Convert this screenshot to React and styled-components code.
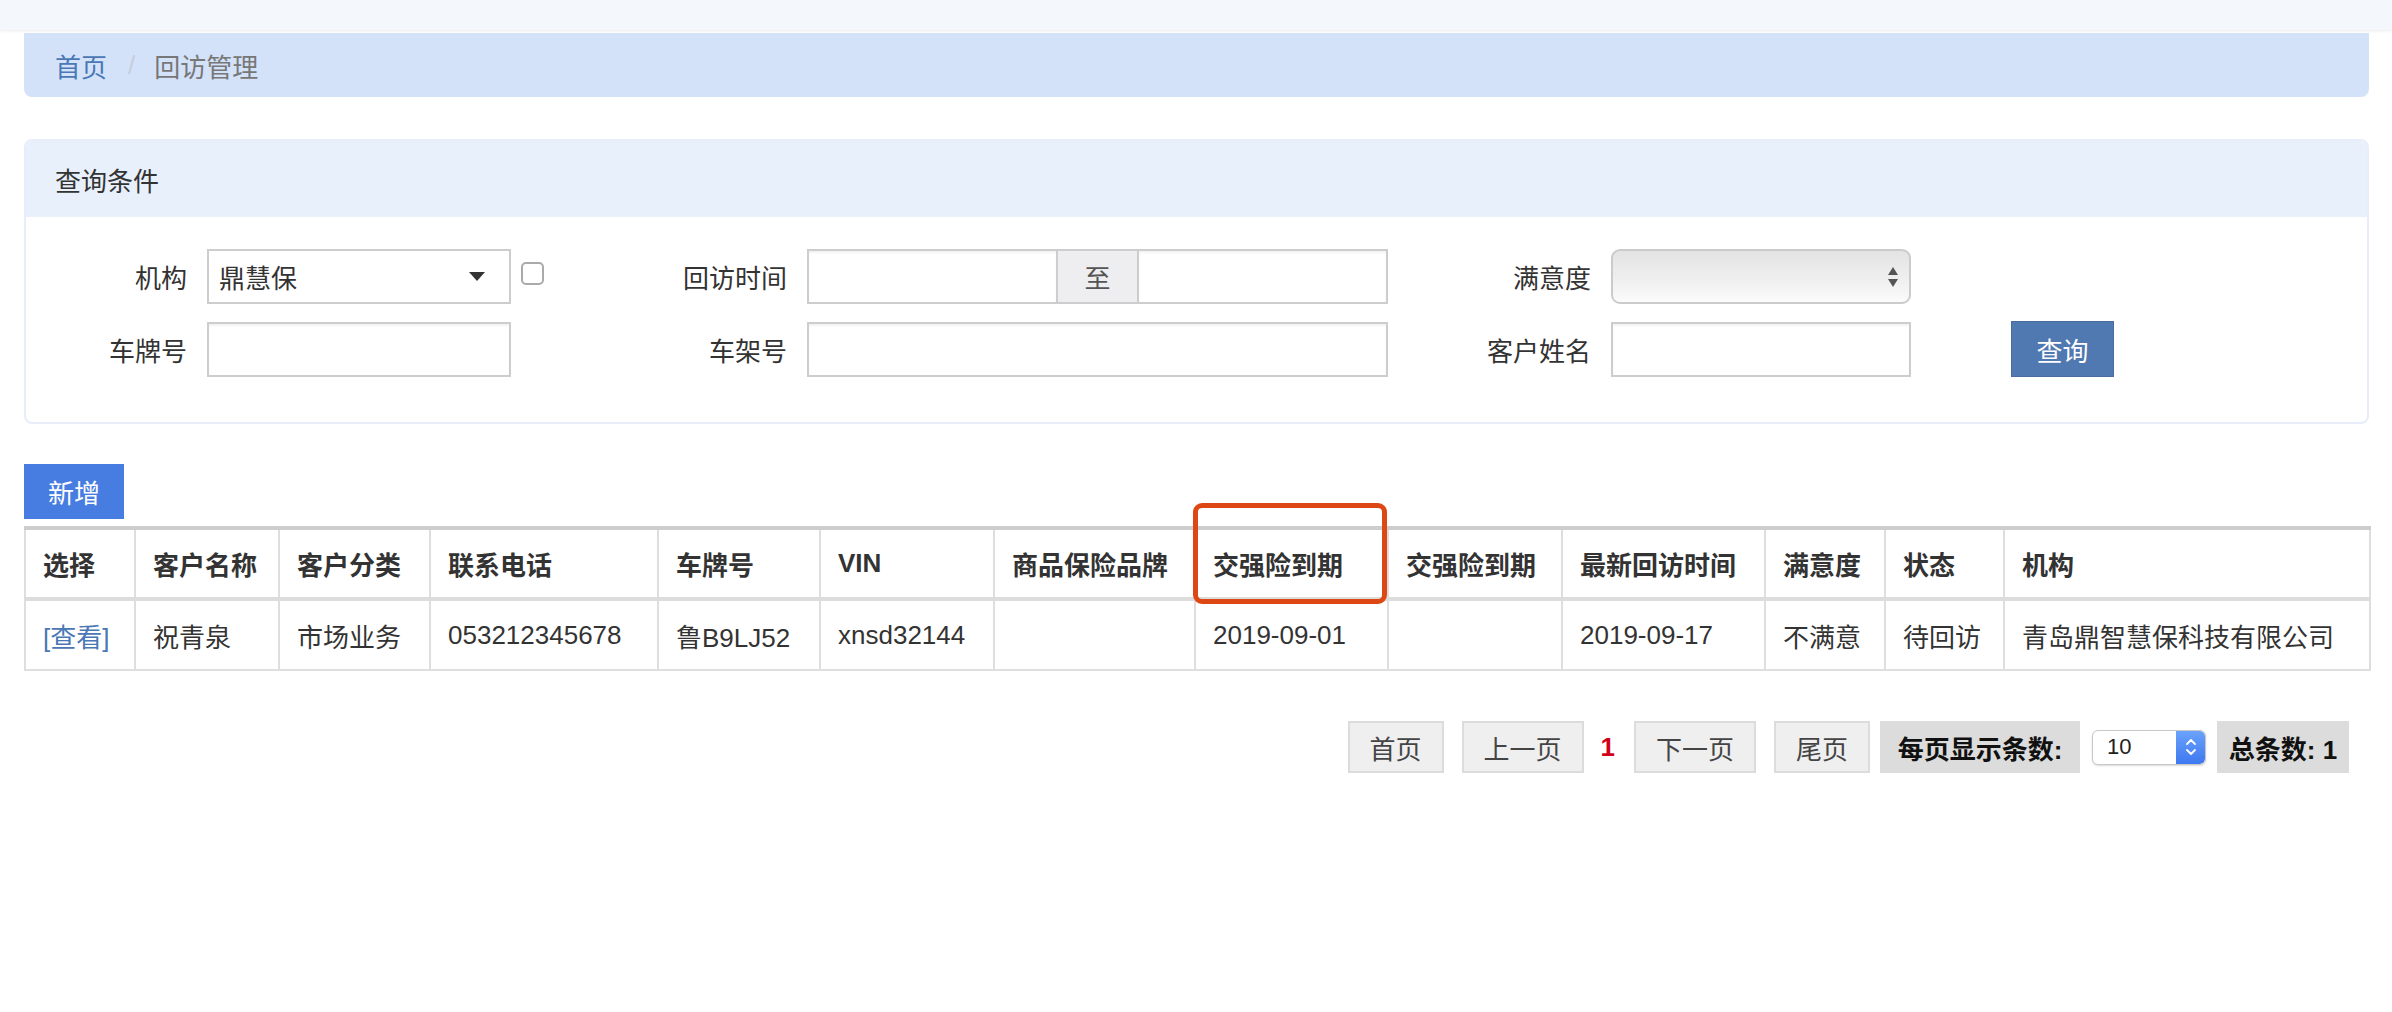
import React from 'react';
import styled, { createGlobalStyle, css } from 'styled-components';

const GlobalStyle = createGlobalStyle`
    html, body {
        margin: 0;
        padding: 0;
        background: #fff;
    }
    body {
        font-family: "Liberation Sans", "Noto Sans CJK SC", sans-serif;
        font-size: 26px;
        color: #333;
    }
    * { box-sizing: border-box; }
`;

const columnas = [
    { titulo: '选择', ancho: 110 },
    { titulo: '客户名称', ancho: 144 },
    { titulo: '客户分类', ancho: 151 },
    { titulo: '联系电话', ancho: 228 },
    { titulo: '车牌号', ancho: 162 },
    { titulo: 'VIN', ancho: 174 },
    { titulo: '商品保险品牌', ancho: 201 },
    { titulo: '交强险到期', ancho: 193, marcado: true },
    { titulo: '交强险到期', ancho: 174 },
    { titulo: '最新回访时间', ancho: 203 },
    { titulo: '满意度', ancho: 120 },
    { titulo: '状态', ancho: 119 },
    { titulo: '机构', ancho: 366 },
];

const fila = ['祝青泉', '市场业务', '053212345678', '鲁B9LJ52', 'xnsd32144', '', '2019-09-01', '', '2019-09-17', '不满意', '待回访', '青岛鼎智慧保科技有限公司'];

const App = () => {
    return (
        <>
            <GlobalStyle />
            <TopBar />
            <Contenido>
                <Breadcrumb>
                    <Enlace>首页</Enlace>
                    <Separador>/</Separador>
                    <Actual>回访管理</Actual>
                </Breadcrumb>

                <Tarjeta>
                    <TarjetaHeader>查询条件</TarjetaHeader>
                    <Formulario>
                        <Etiqueta>机构</Etiqueta>
                        <SelectFalso>
                            <span>鼎慧保</span>
                            <Triangulo />
                        </SelectFalso>
                        <CeldaCheck><Checkbox /></CeldaCheck>
                        <Etiqueta>回访时间</Etiqueta>
                        <Rango>
                            <Input />
                            <Addon>至</Addon>
                            <Input />
                        </Rango>
                        <Etiqueta>满意度</Etiqueta>
                        <SelectMac>
                            <Flechas>
                                <svg width="12" height="24" viewBox="0 0 12 24">
                                    <path d="M6 2 L11 10 L1 10 Z" fill="#555" />
                                    <path d="M1 14 L11 14 L6 22 Z" fill="#555" />
                                </svg>
                            </Flechas>
                        </SelectMac>
                        <div />

                        <Etiqueta>车牌号</Etiqueta>
                        <Input />
                        <div />
                        <Etiqueta>车架号</Etiqueta>
                        <Input />
                        <Etiqueta>客户姓名</Etiqueta>
                        <Input />
                        <CeldaBoton><BotonConsulta>查询</BotonConsulta></CeldaBoton>
                    </Formulario>
                </Tarjeta>

                <BotonNuevo>新增</BotonNuevo>

                <Tabla>
                    <colgroup>
                        {columnas.map((c, i) => <col key={i} style={{ width: c.ancho }} />)}
                    </colgroup>
                    <thead>
                        <tr>
                            {columnas.map((c, i) => (
                                <Th key={i}>
                                    {c.titulo}
                                    {c.marcado && <Marca />}
                                </Th>
                            ))}
                        </tr>
                    </thead>
                    <tbody>
                        <tr>
                            <Td><Ver>[查看]</Ver></Td>
                            {fila.map((v, i) => <Td key={i}>{v}</Td>)}
                        </tr>
                    </tbody>
                </Tabla>

                <Paginacion>
                    <BotonPagina ancho={96}>首页</BotonPagina>
                    <BotonPagina ancho={122}>上一页</BotonPagina>
                    <PaginaActual>1</PaginaActual>
                    <BotonPagina ancho={122}>下一页</BotonPagina>
                    <BotonPagina ancho={96}>尾页</BotonPagina>
                    <Info ancho={200}>每页显示条数:</Info>
                    <SelectPagina>
                        <span>10</span>
                        <Stepper>
                            <svg width="14" height="22" viewBox="0 0 14 22">
                                <path d="M3 8 L7 4 L11 8" stroke="#fff" strokeWidth="1.8" fill="none" strokeLinecap="round" strokeLinejoin="round" />
                                <path d="M3 14 L7 18 L11 14" stroke="#fff" strokeWidth="1.8" fill="none" strokeLinecap="round" strokeLinejoin="round" />
                            </svg>
                        </Stepper>
                    </SelectPagina>
                    <Info ancho={132}>总条数: 1</Info>
                </Paginacion>
            </Contenido>
        </>
    );
}

const TopBar = styled.div`
    height: 30px;
    background: #f4f8fc;
    box-shadow: 0 1px 3px rgba(0, 0, 0, 0.08);
`;

const Contenido = styled.div`
    padding: 0 23px 0 24px;
`;

const Breadcrumb = styled.div`
    display: flex;
    align-items: center;
    height: 64px;
    margin-top: 3px;
    padding-left: 31px;
    background: #d3e2f9;
    border-radius: 0 0 8px 8px;
`;

const Enlace = styled.span`
    color: #4a77b5;
`;

const Separador = styled.span`
    color: #c5cedb;
    margin: 0 19px 0 21px;
`;

const Actual = styled.span`
    color: #777;
`;

const Tarjeta = styled.div`
    margin-top: 42px;
    border: 2px solid #e7eef9;
    border-radius: 8px;
    overflow: hidden;
`;

const TarjetaHeader = styled.div`
    display: flex;
    align-items: center;
    height: 76px;
    padding-left: 29px;
    background: #e8f0fc;
    color: #333;
`;

const Formulario = styled.div`
    display: grid;
    grid-template-columns: 181px 304px 69px 227px 581px 223px 300px auto;
    row-gap: 17px;
    align-items: center;
    padding: 32px 0 45px;
`;

const Etiqueta = styled.label`
    text-align: right;
    padding-right: 20px;
    color: #333;
`;

const controlBase = css`
    height: 55px;
    border: 2px solid #cdcdcd;
    background: #fff;
`;

const Input = styled.div`
    ${controlBase}
    box-shadow: inset 0 2px 2px rgba(0, 0, 0, 0.05);
`;

const SelectFalso = styled.div`
    ${controlBase}
    display: flex;
    align-items: center;
    justify-content: space-between;
    padding: 0 24px 0 10px;
    color: #333;
`;

const Triangulo = styled.span`
    width: 0;
    height: 0;
    border-left: 8px solid transparent;
    border-right: 8px solid transparent;
    border-top: 9px solid #333;
`;

const CeldaCheck = styled.div`
    padding-left: 10px;
    align-self: start;
    padding-top: 13px;
`;

const Checkbox = styled.div`
    width: 23px;
    height: 23px;
    border: 2px solid #aaa;
    border-radius: 5px;
    background: #fff;
`;

const Rango = styled.div`
    display: grid;
    grid-template-columns: 1fr 79px 1fr;
`;

const Addon = styled.div`
    ${controlBase}
    display: flex;
    align-items: center;
    justify-content: center;
    background: #eeeef0;
    border-left: none;
    border-right: none;
    color: #555;
`;

const SelectMac = styled.div`
    height: 55px;
    border: 2px solid #cbcbcb;
    border-radius: 9px;
    background: linear-gradient(#e3e3e3, #f0f0f0 60%, #fbfbfb);
    display: flex;
    align-items: center;
    justify-content: flex-end;
    padding-right: 10px;
`;

const Flechas = styled.span`
    display: flex;
`;

const CeldaBoton = styled.div`
    padding-left: 100px;
`;

const BotonConsulta = styled.button`
    width: 103px;
    height: 56px;
    border: 1px solid #4a6c9f;
    background: #5078b1;
    color: #fff;
    font-family: inherit;
    font-size: 26px;
    cursor: pointer;
`;

const BotonNuevo = styled.button`
    display: block;
    margin-top: 40px;
    width: 100px;
    height: 55px;
    border: none;
    background: #477de1;
    color: #fff;
    font-family: inherit;
    font-size: 26px;
    cursor: pointer;
`;

const Tabla = styled.table`
    margin-top: 7px;
    width: 2345px;
    border-collapse: collapse;
    table-layout: fixed;
    border-top: 4px solid #cdcdcd;
`;

const celda = css`
    height: 71px;
    padding: 0 17px;
    text-align: left;
    border: 2px solid #dedede;
    white-space: nowrap;
`;

const Th = styled.th`
    ${celda}
    position: relative;
    font-weight: bold;
    color: #333;
    border-top: none;
    border-bottom: 4px solid #dcdcdc;
`;

const Td = styled.td`
    ${celda}
    color: #333;
`;

const Ver = styled.span`
    color: #4a77b5;
`;

const Marca = styled.span`
    position: absolute;
    top: -27px;
    bottom: -7px;
    left: -3px;
    right: 0;
    border: 5px solid #dc4713;
    border-radius: 9px;
    pointer-events: none;
`;

const Paginacion = styled.div`
    display: flex;
    justify-content: flex-end;
    align-items: center;
    margin-top: 50px;
    padding-right: 20px;
`;

const BotonPagina = styled.div`
    width: ${props => props.ancho}px;
    height: 52px;
    margin-left: 18px;
    display: flex;
    align-items: center;
    justify-content: center;
    background: #efeff0;
    border: 2px solid #dcdcdc;
    color: #444;
`;

const PaginaActual = styled.span`
    margin-left: 17px;
    margin-right: 1px;
    color: #d0021b;
    font-weight: bold;
`;

const Info = styled.div`
    width: ${props => props.ancho}px;
    height: 52px;
    margin-left: 10px;
    display: flex;
    align-items: center;
    justify-content: center;
    background: #dcdcdc;
    color: #111;
    font-weight: bold;
    white-space: nowrap;
`;

const SelectPagina = styled.div`
    display: flex;
    align-items: center;
    justify-content: space-between;
    width: 114px;
    height: 35px;
    margin-left: 12px;
    margin-right: 1px;
    padding-left: 14px;
    border: 1px solid #c8c8c8;
    border-radius: 6px;
    background: #fff;
    box-shadow: 0 1px 2px rgba(0, 0, 0, 0.15);
    font-size: 22px;
    color: #222;
    overflow: hidden;
`;

const Stepper = styled.span`
    display: flex;
    align-items: center;
    justify-content: center;
    width: 29px;
    height: 100%;
    background: linear-gradient(#6aa2fb, #3e78f0);
    border-radius: 0 5px 5px 0;
`;

export default App;
